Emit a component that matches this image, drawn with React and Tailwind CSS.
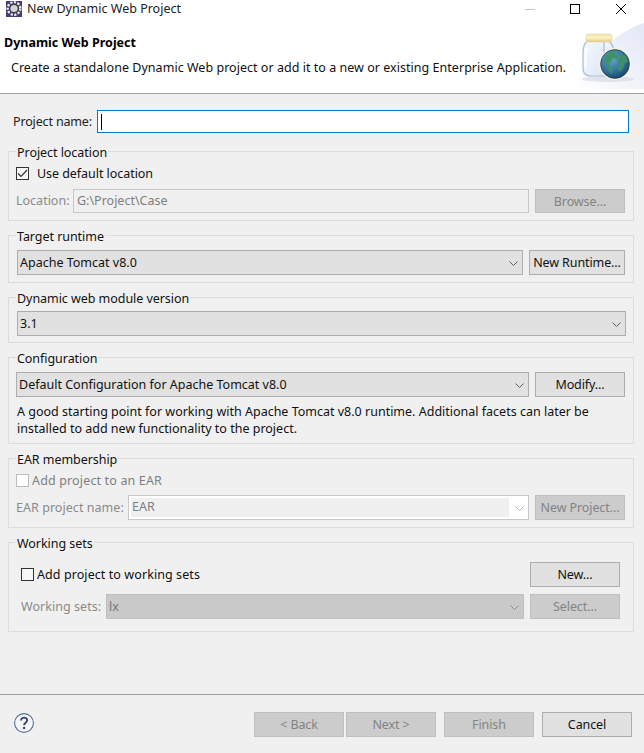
import React from "react";

const Chevron = ({ c = "#6b6b6b" }) => (
  <svg width="9" height="5" viewBox="0 0 9 5" className="shrink-0 mt-px">
    <path d="M.5 .5 4.5 4.5 8.5 .5" fill="none" stroke={c} strokeWidth="1" />
  </svg>
);

const Btn = ({ children, off, w = "w-[90px]", h = "h-[25px]" }) => (
  <div
    className={`${w} ${h} shrink-0 flex items-center justify-center border pt-[2px] tracking-[-0.1px] ${
      off ? "bg-[#cccccc] border-[#bfbfbf] text-[#838383]" : "bg-[#e1e1e1] border-[#adadad] text-[#111111]"
    }`}
  >
    {children}
  </div>
);

const Select = ({ children, off, w }) => (
  <div
    className={`${w} h-[25px] shrink-0 flex items-center justify-between pl-[2px] pr-[4px] border ${
      off ? "bg-[#c9c9c9] border-[#bfbfbf] text-[#777777]" : "bg-[#e1e1e1] border-[#adadad] text-[#111111]"
    }`}
  >
    <span className="pt-[2px]">{children}</span>
    <Chevron c={off ? "#8c8c8c" : "#5f5f5f"} />
  </div>
);

const Group = ({ title, h, children, className = "" }) => (
  <fieldset className={`${h} mx-2 w-[626px] border border-[#dcdcdc] ${className}`}>
    <legend className="ml-[7px] px-px h-4 leading-[20px] tracking-[-0.05px] text-[#111111]">{title}</legend>
    {children}
  </fieldset>
);

const Check = ({ checked, tone = "dark", className = "" }) => (
  <div
    className={`w-[13px] h-[13px] shrink-0 border flex items-center justify-center ${
      tone === "dark" ? "border-[#333333] bg-[#f7f7f7]" : "border-[#bdbdbd] bg-white"
    } ${className}`}
  >
    {checked && (
      <svg width="11" height="9" viewBox="0 0 11 9">
        <path d="M1 4.5 4 7.5 10 1" fill="none" stroke="#333333" strokeWidth="1.2" />
      </svg>
    )}
  </div>
);

const Globe = () => (
  <svg width="74" height="74" viewBox="0 0 74 74" className="shrink-0">
    <defs>
      <linearGradient id="lid" x1="0" y1="0" x2="0" y2="1">
        <stop offset="0" stopColor="#f6e4ac" />
        <stop offset=".5" stopColor="#fbf0c8" />
        <stop offset="1" stopColor="#e5c983" />
      </linearGradient>
      <linearGradient id="jar" x1="0" y1="0" x2="1" y2="1">
        <stop offset="0" stopColor="#f6f9fe" />
        <stop offset="1" stopColor="#dbe5f4" />
      </linearGradient>
      <radialGradient id="sea" cx=".38" cy=".3" r=".8">
        <stop offset="0" stopColor="#63aac6" />
        <stop offset=".6" stopColor="#2f7099" />
        <stop offset="1" stopColor="#153a63" />
      </radialGradient>
      <linearGradient id="halo" x1="0" y1="1" x2="1" y2="0">
        <stop offset="0" stopColor="#ffffff" />
        <stop offset="1" stopColor="#e3e7f6" />
      </linearGradient>
    </defs>
    <path d="M74 4C48 12 16 40 3 70h71z" fill="url(#halo)" />
    <ellipse cx="38" cy="60" rx="26" ry="3" fill="#d6dae3" opacity=".7" />
    <path d="M17 22c-3 3-4 7-4 11v17c0 4 3 7 7 7h18V33c0-5-1-8-4-11z" fill="url(#jar)" stroke="#a9bbd6" strokeWidth="1.2" />
    <path d="M34 22h5c3 3 5 7 5 11v6H34z" fill="url(#jar)" stroke="#a9bbd6" strokeWidth="1.2" />
    <path d="M17 29c-1 3-1.500 6-1.500 9v11" fill="none" stroke="#ffffff" strokeWidth="2" />
    <rect x="16" y="15" width="26" height="8" rx="2.500" fill="url(#lid)" stroke="#e8d49c" strokeWidth=".6" />
    <circle cx="45" cy="45" r="16" fill="#f8f3d8" />
    <circle cx="45" cy="45" r="14.400" fill="url(#sea)" stroke="#20384f" strokeWidth=".7" />
    <path d="M36 36c3-3 8-5 11-4l-2 3 4 1-2 4-4-1-1 3-3 2 1 4 3 2-1 5c-3-2-5-6-5-9l-3-3c0-3 1-5 2-7z" fill="#3f8f6b" />
    <path d="M50 35l6 2 2 6-3 1-2 5-3 4-2-4 1-5-2-3 3-2z" fill="#3f8f6b" />
  </svg>
);

const TitleIcon = () => (
  <svg width="16" height="16" viewBox="0 0 16 16" className="shrink-0">
    <rect x="0" y="-1" width="16" height="17" fill="#4a3a72" />
    <circle cx="8" cy="7.500" r="6.300" fill="none" stroke="#e8e8ee" strokeWidth="2.400" strokeDasharray="2.200 1.400" />
    <circle cx="8" cy="7.500" r="5" fill="#3e3e46" />
    <circle cx="8" cy="7.500" r="3.600" fill="#d3d4da" />
  </svg>
);

const Help = () => (
  <svg width="20" height="20" viewBox="0 0 20 20">
    <circle cx="10" cy="10" r="9.400" fill="#f4f6fa" stroke="#56709a" strokeWidth="1.100" />
    <path d="M7 7.600c0-2 1.400-3 3.100-3s3 1 3 2.700c0 2.400-3 2.400-3 4.900" fill="none" stroke="#37486a" strokeWidth="1.900" />
    <circle cx="10.100" cy="15" r="1.200" fill="#37486a" />
  </svg>
);

export default function App() {
  return (
    <div
      className="w-[644px] h-[753px] flex flex-col bg-[#f0f0f0] text-[12.5px] text-[#111111] overflow-hidden"
      style={{ fontFamily: '"Noto Sans", "Open Sans", sans-serif' }}
    >
      <header className="h-[94px] shrink-0 bg-white border-b border-[#a0a0a0] flex flex-col">
        <div className="h-[18px] flex items-center pl-[6px]">
          <TitleIcon />
          <span className="ml-[5px] text-[#222222]">New Dynamic Web Project</span>
          <div className="ml-auto flex items-center pr-[18px]">
            <div className="w-[10px] h-px bg-[#c4c4c4]" />
            <div className="ml-[35px] w-[10px] h-[10px] border border-black" />
            <svg width="10" height="10" viewBox="0 0 10 10" className="ml-[36px]">
              <path d="M0 0l10 10M10 0 0 10" stroke="#000" strokeWidth="1" />
            </svg>
          </div>
        </div>
        <div className="flex flex-1 min-h-0">
          <div className="flex-1 min-w-0">
            <div className="pl-[4px] pt-[16px] font-bold leading-[18px] text-black">Dynamic Web Project</div>
            <div className="pl-[11px] pt-[7px] leading-[18px] whitespace-nowrap tracking-[0.03px]">
              Create a standalone Dynamic Web project or add it to a new or existing Enterprise Application.
            </div>
          </div>
          <div className="self-end shrink-0">
            <Globe />
          </div>
        </div>
      </header>

      <main className="flex-1 flex flex-col">
        <div className="flex items-center h-[23px] mt-[16px] pl-[13px]">
          <span className="w-[84px] shrink-0 pt-[2px] tracking-[-0.15px] text-[#222222]">Project name:</span>
          <div className="w-[532px] h-[23px] bg-white border border-[#0078d7] flex items-center pl-[3px]">
            <div className="w-px h-[16px] bg-black" />
          </div>
        </div>

        <Group title="Project location" h="h-[78px]" className="mt-[10px]">
          <div className="flex items-center h-[13px] mt-2 pl-[7px]">
            <Check checked />
            <span className="ml-2 pt-[2px] tracking-[-0.05px]">Use default location</span>
          </div>
          <div className="flex items-center mt-[9px] pl-[7px]">
            <span className="w-[57px] shrink-0 pt-px text-[#8a8a8a]">Location:</span>
            <div className="w-[456px] h-[24px] border border-[#c8c8c8] bg-[#f0f0f0] flex items-center pl-[3px] pt-px text-[#7e7e7e]">
              G:\Project\Case
            </div>
            <div className="ml-[6px]">
              <Btn off h="h-[24px]">Browse...</Btn>
            </div>
          </div>
        </Group>

        <Group title="Target runtime" h="h-[56px]" className="mt-[6px]">
          <div className="flex items-center pt-[7px] pl-2">
            <Select w="w-[506px]">Apache Tomcat v8.0</Select>
            <div className="ml-[6px]">
              <Btn w="w-[96px]">New Runtime...</Btn>
            </div>
          </div>
        </Group>

        <Group title="Dynamic web module version" h="h-[54px]" className="mt-[6px]">
          <div className="pt-[6px] pl-2">
            <Select w="w-[609px]">3.1</Select>
          </div>
        </Group>

        <Group title="Configuration" h="h-[95px]" className="mt-[6px]">
          <div className="flex items-center pt-[7px] pl-[7px]">
            <Select w="w-[513px]">Default Configuration for Apache Tomcat v8.0</Select>
            <div className="ml-[6px]">
              <Btn>Modify...</Btn>
            </div>
          </div>
          <p className="pt-[6px] pl-[8px] leading-[17px] w-[600px]">
            A good starting point for working with Apache Tomcat v8.0 runtime. Additional facets can later be installed to add new functionality to the project.
          </p>
        </Group>

        <Group title="EAR membership" h="h-[78px]" className="mt-[6px]">
          <div className="flex items-center h-[13px] mt-2 pl-[7px]">
            <Check tone="light" />
            <span className="ml-[3px] pt-[2px] tracking-[0.15px] text-[#7f7f7f]">Add project to an EAR</span>
          </div>
          <div className="flex items-center mt-2 pl-[7px]">
            <span className="w-[112px] shrink-0 pt-[2px] tracking-[0.05px] text-[#8a8a8a]">EAR project name:</span>
            <div className="w-[401px] h-[25px] border border-[#c8c8c8] bg-white flex items-center justify-between pl-[2px] pr-[4px]">
              <div className="w-[378px] h-[19px] bg-[#f0f0f0] flex items-center pl-px text-[#7e7e7e]">EAR</div>
              <Chevron c="#b5b5b5" />
            </div>
            <div className="ml-[6px]">
              <Btn off>New Project...</Btn>
            </div>
          </div>
        </Group>

        <Group title="Working sets" h="h-[98px]" className="mt-[6px]">
          <div className="flex items-center mt-[12px] pl-[12px]">
            <Check />
            <span className="ml-[3px] w-[493px] shrink-0 pt-[2px] tracking-[0.08px]">Add project to working sets</span>
            <Btn>New...</Btn>
          </div>
          <div className="flex items-center mt-[7px] pl-[12px]">
            <span className="w-[85px] shrink-0 pt-[2px] tracking-[0.05px] text-[#8a8a8a]">Working sets:</span>
            <Select off w="w-[418px]">lx</Select>
            <div className="ml-[6px]">
              <Btn off>Select...</Btn>
            </div>
          </div>
        </Group>
      </main>

      <footer className="h-[59px] shrink-0 border-t border-[#a0a0a0] flex items-start pt-[17px] pl-[14px]">
        <div className="mt-px w-[20px] h-[20px]">
          <Help />
        </div>
        <div className="ml-[220px] flex">
          <Btn off>&lt; Back</Btn>
          <div className="ml-[2px]"><Btn off>Next &gt;</Btn></div>
          <div className="ml-[8px]"><Btn off>Finish</Btn></div>
          <div className="ml-[8px]"><Btn>Cancel</Btn></div>
        </div>
      </footer>
    </div>
  );
}
